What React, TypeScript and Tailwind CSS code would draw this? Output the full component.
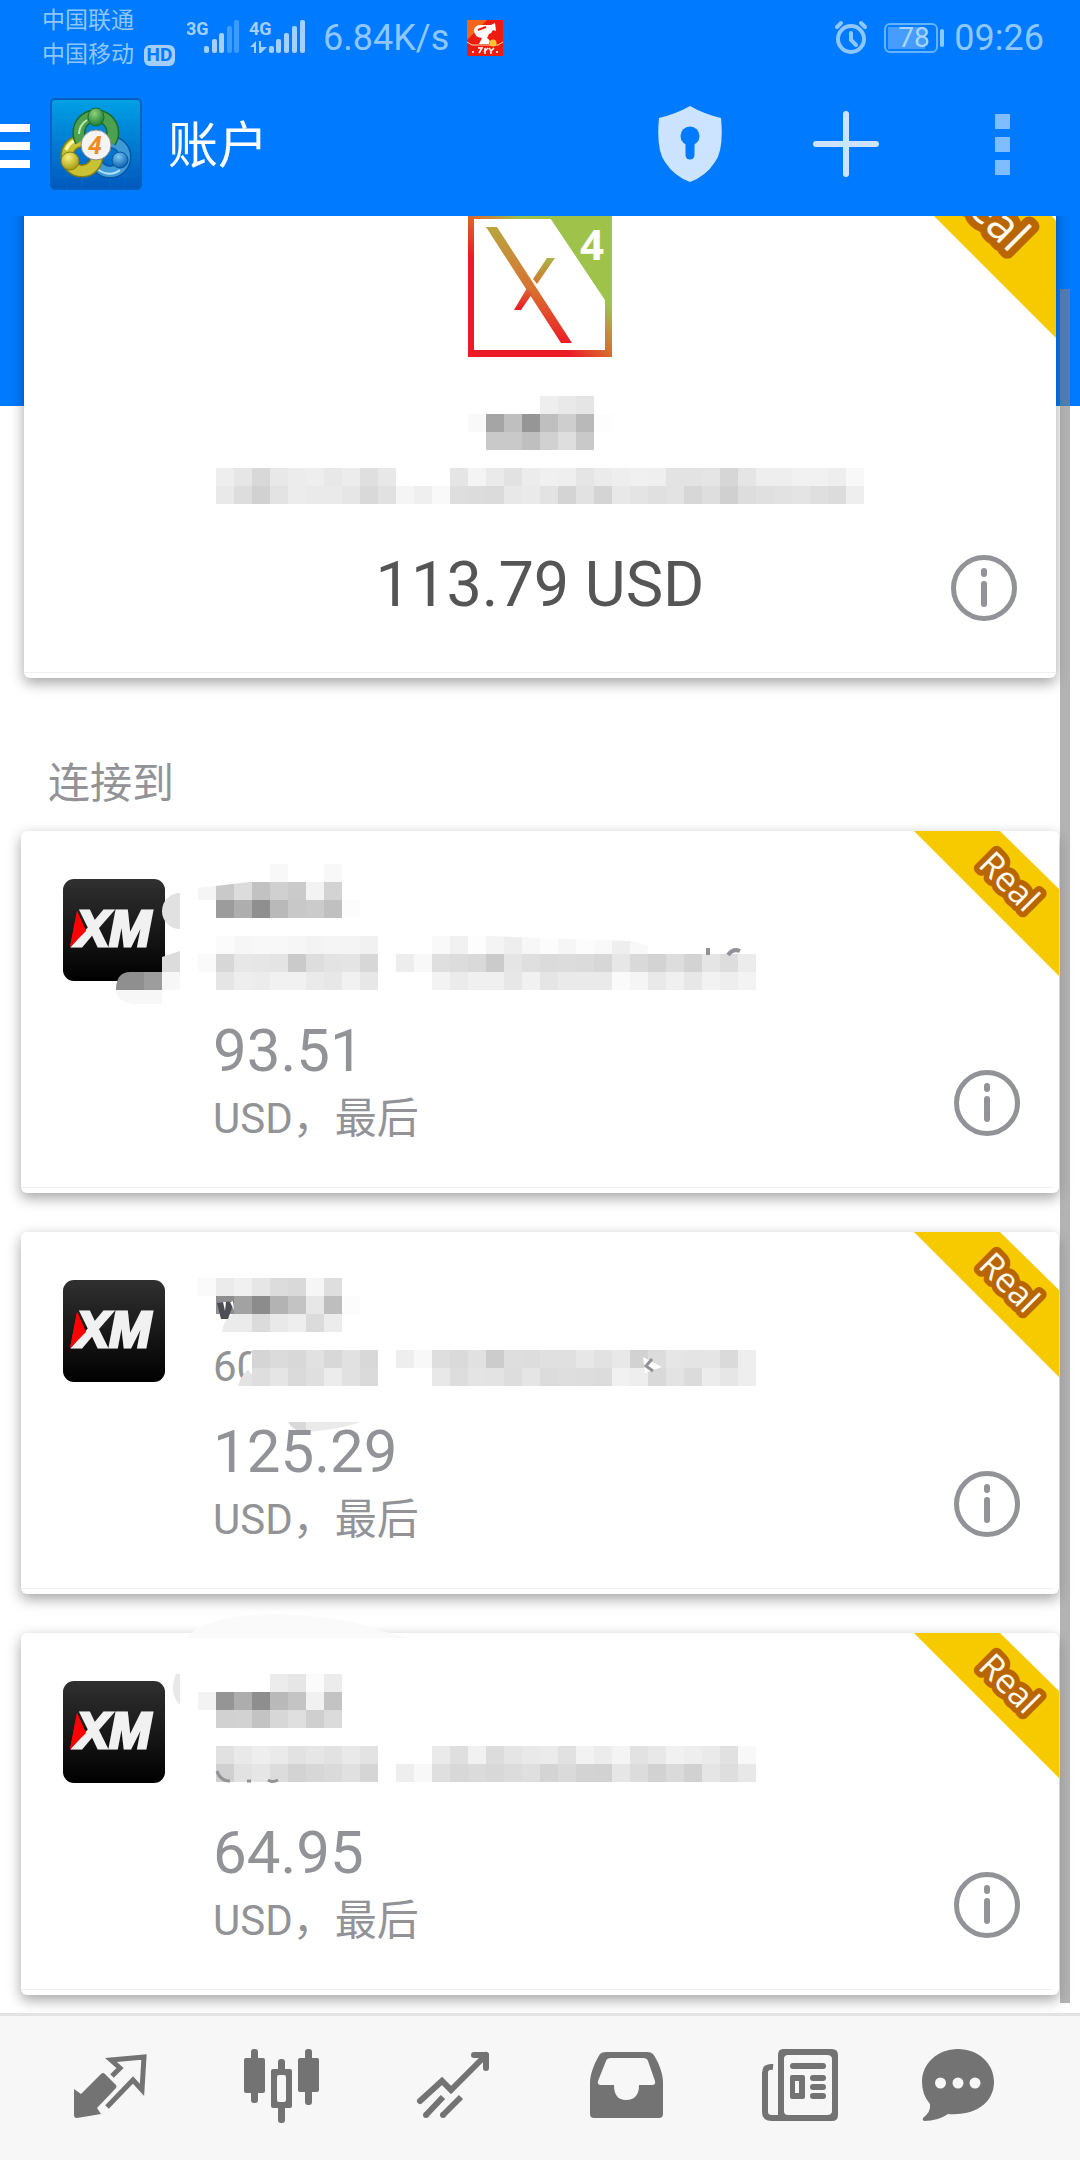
import React from 'react';
import { clsx } from 'clsx';

type MosaicRow = [x: number, y: number, shades: string];

interface Account {
  id: string;
  balance: string;
  rows: MosaicRow[];
  under?: React.ReactNode;
  over?: React.ReactNode;
}

const CELL = 18;

// x, y of the first cell, then one grey level per cell
const mainRows: MosaicRow[] = [
  [324, 0, 'ee e9 e5'],
  [252, 18, 'f9 a5 bf 96 bf ce b9 fd'],
  [270, 36, 'c9 c9 bf d1 de c9'],
  [0, 72, 'ee e6 d8 e8 ec ee e8 ec df e8'],
  [234, 72, 'e5 f4 ea e2 ec f0 ef e5 eb ee f0 ef e3 e3 e5 d6 e5 ee ee f1 f1 ee f8'],
  [0, 90, 'e9 dd d1 e3 ec ea ea e6 d9 e1 f5 ef f9'],
  [234, 90, 'de dc db e8 ea e3 d4 e2 d4 e8 e4 e0 e3 d7 de d0 dd e0 e2 e4 df dc ee'],
];

const accounts: Account[] = [
  {
    id: 'a',
    balance: '93.51',
    rows: [
      [54, 33, 'f8'],
      [108, 33, 'f8'],
      [-18, 51, 'f5 c9 dc c2 d0 ca f3 d3'],
      [0, 69, '9c ae 8f b9 c8 cb c0 fc'],
      [0, 105, 'fb f6 f8 f8 f6 f3 f5 f4 f1'],
      [216, 105, 'f9 f1 fd f4 ee f7 fc f6 fc f9 ee f8'],
      [-18, 123, 'fa d7 e7 e6 e4 ca dd e3 e4 d7'],
      [180, 123, 'ed f8 df dc d9 cb e5 df db dc db d7 e7 d9 d3 dd d3 e5 dd ec'],
      [0, 141, 'e5 ee ec f1 f1 ea e7 f1 e7'],
      [216, 141, 'f3 eb f0 f0 e7 f1 e5 ea ea ea fa f5 e9 f0 e7 f2 ee f3'],
    ],
    over: (
      <>
        <path d="M-36 62 A18 18 0 0 0 -36 98Z" fill="#e1e1e1" />
        <path d="M-54 126L-36 120V159H-54Z" fill="#dcdcdc" />
        <path d="M-54 141H-36V159H-54Z" fill="#f7f7f7" />
        <path d="M-84 173Q-100 170 -100 158H-54V173Z" fill="#f7f7f7" />
        <path d="M-100 159Q-100 141 -86 141H-72V159Z" fill="#8f8f8f" />
        <path d="M-72 141H-54V159H-72Z" fill="#9d9d9d" />
        <path d="M-18 57L34 51H-18Z M216 105H272L416 110L464 123H500V105Z" fill="#fff" />
        <path d="M492 117V124M512 124Q517 117 524 120" fill="none" stroke="#929397" strokeWidth="4" />
      </>
    ),
  },
  {
    id: 'b',
    balance: '125.29',
    rows: [
      [-18, 46, 'fa eb f0 e6 dc d9 f6 de'],
      [0, 64, '8e a2 8c b3 c3 e7 be fc'],
      [18, 82, 'eb db e9 ee db ec'],
      [36, 118, 'd5 db d8 e1 d8 e1 d8'],
      [180, 118, 'ee f8 de da e1 cc de dd e0 e0 e7 e2 e8 d2 dc e6 e4 e5 da ee'],
      [36, 136, 'de e5 da df ec e1 da'],
      [216, 136, 'e8 dd e4 e3 dd e5 dc de dd dc f1 ee d9 e3 db ec e6 ee'],
    ],
    under: (
      <text x="-3" y="149" fontSize="42" fill="#929397">60</text>
    ),
    over: (
      <>
        <path d="M6 100Q8 86 18 82V100Z" fill="#ebebeb" />
        <path d="M22 154Q26 140 36 136V154Z" fill="#e3e3e3" />
        <path d="M36 119Q28 134 35 142L36 142Z" fill="#fff" />
        <path d="M1 71L18 69L16 76L12 87H5Z" fill="#4d4d55" />
        <path d="M7 70L10 70L9 79Z M14 70L17 69L18 78Z" fill="#fff" />
        <path d="M72 190Q76 199 90 200V190Z" fill="#d8d8d8" />
        <path d="M90 190H146Q120 198 90 200Z" fill="#eaeaea" />
        <path d="M427 125L446 135L429 141Z" fill="#fff" />
        <path d="M436 127L430 134L437 139" fill="none" stroke="#929397" strokeWidth="3" />
      </>
    ),
  },
  {
    id: 'c',
    balance: '64.95',
    rows: [
      [54, 41, 'ec e6 fb ec'],
      [-18, 59, 'f3 95 ad 8e b9 c4 f1 c3'],
      [0, 77, 'd1 d2 c3 d7 df cf db'],
      [0, 113, 'e1 e9 ee ea e2 e6 e2 e9 e3'],
      [216, 113, 'ea df f1 dc e5 e9 eb e1 f2 ec f4 e2 e8 f1 ee ea e1 f8'],
      [0, 131, 'd0 e2 e6 dc d3 d7 da e0 d5'],
      [180, 131, 'ee f8 df d8 db d8 dc df d4 da d3 d2 e6 dc d2 da d1 e5 de e8'],
    ],
    under: <path d="M-30 5Q-10 -18 60 -19Q130 -17 166 -2L192 5H-30Z" fill="#fafafa" />,
    over: (
      <>
        <path d="M-36 41V72Q-48 60 -40 41Z" fill="#e8e8e8" />
        <path d="M1 138Q4 148 14 148M31 148H35M52 147Q56 150 62 147" fill="none" stroke="#929397" strokeWidth="3" />
      </>
    ),
  },
];

function Mosaic({ rows, under, over, className }: {
  rows: MosaicRow[];
  under?: React.ReactNode;
  over?: React.ReactNode;
  className: string;
}) {
  return (
    <svg className={clsx('block overflow-visible', className)} aria-hidden="true">
      {under}
      {rows.map(([x, y, shades]) =>
        shades.split(' ').map((s, i) => (
          <rect key={`${x}-${y}-${i}`} x={x + i * CELL} y={y} width={CELL} height={CELL} fill={`#${s}${s}${s}`} />
        ))
      )}
      {over}
    </svg>
  );
}

function Ribbon({ className }: { className: string }) {
  return (
    <svg viewBox="0 0 145 145" className={clsx('absolute top-0 right-0', className)}>
      <path d="M0 0H86L145 58V145Z" fill="#f7ca00" />
      <text
        transform="translate(87 59) rotate(45)"
        textAnchor="middle"
        fontSize="34"
        fontWeight="500"
        fill="#fffaf0"
        stroke="#b96600"
        strokeWidth="11"
        strokeLinejoin="round"
        paintOrder="stroke"
        className="font-['Open_Sans','Noto_Sans',sans-serif]"
      >
        Real
      </text>
    </svg>
  );
}

function InfoButton() {
  return (
    <button type="button" aria-label="Info" className="mr-[39px] size-[66px] shrink-0">
      <svg viewBox="0 0 66 66" fill="none" stroke="#929397" strokeLinecap="round">
        <circle cx="33" cy="33" r="30.5" strokeWidth="5" />
        <path d="M33 16V19M33 29V49" strokeWidth="6" />
      </svg>
    </button>
  );
}

function BrokerLogo() {
  return (
    <svg viewBox="0 0 144 144" className="mx-auto block size-36">
      <defs>
        <linearGradient id="frame" gradientUnits="userSpaceOnUse" x1="52" y1="92" x2="96" y2="48">
          <stop offset="0" stopColor="#ec1c27" />
          <stop offset="0.5" stopColor="#d8702f" />
          <stop offset="1" stopColor="#9fc24b" />
        </linearGradient>
        <linearGradient id="cross" gradientUnits="userSpaceOnUse" x1="0" y1="14" x2="0" y2="130">
          <stop offset="0" stopColor="#b8a63f" />
          <stop offset="0.55" stopColor="#d9702f" />
          <stop offset="1" stopColor="#ec1c27" />
        </linearGradient>
        <linearGradient id="arm" gradientUnits="userSpaceOnUse" x1="0" y1="45" x2="0" y2="96">
          <stop offset="0" stopColor="#aab447" />
          <stop offset="0.55" stopColor="#d9702f" />
          <stop offset="1" stopColor="#ec1c27" />
        </linearGradient>
      </defs>
      <path d="M0 0H144V144H0Z" fill="url(#frame)" />
      <path d="M6 6H83L137 87V137H6Z" fill="#fff" />
      <path d="M83 0H144V88H138L83 6Z" fill="#9fc24b" />
      <path d="M18 14H29L104 130H93Z" fill="url(#cross)" />
      <path d="M79 45H87L69 71L65 66ZM46 97H53L64 81L59 75Z" fill="url(#arm)" />
      <text x="124" y="47" textAnchor="middle" fontSize="42" fontWeight="700" fill="#fff" className="font-['Open_Sans',sans-serif]">4</text>
    </svg>
  );
}

function XmLogo() {
  return (
    <svg viewBox="0 0 102 102" className="mt-12 ml-[42px] block size-[102px] shrink-0">
      <defs>
        <linearGradient id="xm" x1="0" y1="0" x2="0" y2="1">
          <stop offset="0" stopColor="#303030" />
          <stop offset="1" stopColor="#000" />
        </linearGradient>
      </defs>
      <rect width="102" height="102" rx="11" fill="url(#xm)" />
      <path d="M14 32L23 52L7 68Z" fill="#f00" />
      <text
        x="13"
        y="67"
        fontSize="50"
        fontWeight="700"
        fontStyle="italic"
        fill="#f1f1f1"
        stroke="#f1f1f1"
        strokeWidth="3"
        className="font-['Liberation_Sans',sans-serif]"
      >
        XM
      </text>
      <path d="M14 32L23 52L7 68Z" fill="#f00" />
    </svg>
  );
}

function AppLogo() {
  return (
    <svg viewBox="0 0 92 92" className="ml-5 block size-[92px] shrink-0">
      <defs>
        <linearGradient id="tile" x1="0" y1="0" x2="0" y2="1">
          <stop offset="0" stopColor="#00a0e6" />
          <stop offset="1" stopColor="#0058bd" />
        </linearGradient>
        <radialGradient id="green" cx="0.4" cy="0.3" r="0.7">
          <stop offset="0" stopColor="#8ed07c" />
          <stop offset="1" stopColor="#1d7f33" />
        </radialGradient>
        <radialGradient id="yellow" cx="0.4" cy="0.3" r="0.7">
          <stop offset="0" stopColor="#f7f07a" />
          <stop offset="1" stopColor="#a79a12" />
        </radialGradient>
        <radialGradient id="blue" cx="0.4" cy="0.3" r="0.7">
          <stop offset="0" stopColor="#7cc8f5" />
          <stop offset="1" stopColor="#0b5fae" />
        </radialGradient>
      </defs>
      <rect x="1" y="1" width="90" height="90" rx="4" fill="url(#tile)" stroke="#0560c0" strokeWidth="2" />
      <path d="M17 2V90M32 2V90M60 2V90M75 2V90M2 20H90M2 40H90M2 60H90M2 78H90" stroke="#2ba6ea" strokeOpacity="0.12" />
      <g fill="none">
        <circle cx="60" cy="59" r="15" stroke="#0a56a0" strokeWidth="13" />
        <circle cx="60" cy="59" r="15" stroke="#3f9ad8" strokeWidth="10" />
        <path d="M46 69A17 17 0 0 0 70 72" stroke="#b5e2fb" strokeWidth="2" />
        <circle cx="32" cy="58" r="15" stroke="#857c10" strokeWidth="13" />
        <circle cx="32" cy="58" r="15" stroke="#c9c235" strokeWidth="10" />
        <path d="M16 52A17 17 0 0 1 32 41" stroke="#fbf8a8" strokeWidth="3" />
        <path d="M31 43A17 17 0 1 1 60 44" stroke="#1c6b2c" strokeWidth="13" />
        <path d="M31 43A17 17 0 1 1 60 44" stroke="#4da14e" strokeWidth="10" />
        <path d="M29 36A17 17 0 0 1 37 22" stroke="#bde8b0" strokeWidth="2" />
      </g>
      <ellipse cx="46" cy="19" rx="8" ry="9" fill="url(#green)" stroke="#1c6b2c" />
      <circle cx="20" cy="63" r="9" fill="url(#yellow)" stroke="#857c10" />
      <circle cx="70" cy="62" r="8" fill="url(#blue)" stroke="#0a56a0" />
      <circle cx="46" cy="47" r="15" fill="#f4f4f4" stroke="#8a8a8a" />
      <text x="45" y="56" textAnchor="middle" fontSize="25" fontWeight="700" fontStyle="italic" fill="#f08a24">4</text>
    </svg>
  );
}

function StatusBar() {
  return (
    <div className="flex h-[72px] items-center pt-1 pr-9 pl-[42px] text-4xl text-[#8ec7ff]">
      <div className="text-[23px] leading-[34px]">
        <div>中国联通</div>
        <div className="flex items-center">
          中国移动
          <span className="ml-2.5 flex h-[21px] w-[31px] items-center justify-center rounded-md bg-[#a3ceff] text-[19px] font-bold text-[#007aff]">
            HD
          </span>
        </div>
      </div>
      <svg viewBox="0 0 120 40" className="ml-3 block h-10 w-[120px]" fill="#a3d0ff">
        <g className="font-['Roboto',sans-serif]" fontSize="18" fontWeight="700">
          <text x="-1" y="17">3G</text>
          <text x="62" y="17">4G</text>
        </g>
        <rect x="17" y="28" width="5" height="7" rx="2" />
        <rect x="25" y="21" width="5" height="14" rx="2" />
        <rect x="32" y="15" width="5" height="20" rx="2" />
        <rect x="40" y="8" width="5" height="27" rx="2" fill="#3d9aff" />
        <rect x="47" y="2" width="5" height="33" rx="2" fill="#3d9aff" />
        <path d="M63 29L69 23V35H67V29ZM72 23H74V29H80L74 35H72Z" />
        <rect x="82" y="28" width="5" height="7" rx="2" />
        <rect x="89" y="21" width="5" height="14" rx="2" />
        <rect x="97" y="15" width="5" height="20" rx="2" />
        <rect x="105" y="8" width="5" height="27" rx="2" />
        <rect x="113" y="2" width="5" height="33" rx="2" />
      </svg>
      <span className="ml-4">6.84K/s</span>
      <svg viewBox="0 0 36 36" className="ml-[18px] block size-9">
        <rect width="36" height="36" fill="#ee1c10" />
        <path d="M0 0H20L0 20Z" fill="#f4661c" />
        <path d="M7 10Q8 5 14 5H24L28 3L29 11L26 10Q25 13 22 14L20 18Q24 20 22 24H12L15 18Q7 17 7 10Z" fill="#fff" />
        <path d="M11 10L19 7" stroke="#ee1c10" strokeWidth="2" />
        <path d="M0 22L5 25H31L36 22" fill="none" stroke="#ffd5a0" />
        <circle cx="26" cy="23" r="3.5" fill="#ffc62e" />
        <path d="M11 28H15L12 33M18 28V34M21 28L17 32M22 28L24 31L27 28M24 31V34M5 32H7M29 32H31" fill="none" stroke="#fff" strokeWidth="1.5" />
      </svg>
      <svg viewBox="0 0 34 36" className="ml-auto block h-9 w-[34px]" fill="none" stroke="#8ec7ff" strokeLinecap="round">
        <circle cx="17" cy="19" r="13" strokeWidth="4" />
        <path d="M17 13V20L22 25" strokeWidth="4" />
        <path d="M3 7L7 3M31 7L27 3" strokeWidth="4" />
      </svg>
      <div className="ml-4 flex h-[30px] w-[54px] items-center rounded-md border-2 border-[#63b3ff] p-0.5">
        <div className="flex h-full w-[37px] items-center bg-[#479dff] pl-2.5 text-[28px] leading-none text-[#a9d6ff]">78</div>
      </div>
      <div className="ml-0.5 h-[18px] w-1 rounded-sm bg-[#8ec7ff]" />
      <span className="ml-2.5">09:26</span>
    </div>
  );
}

function AppBar() {
  return (
    <div className="flex h-36 items-center pr-[70px]">
      <button type="button" aria-label="Menu" className="flex flex-col gap-2.5 pt-1">
        <span className="h-2 w-[30px] bg-white" />
        <span className="h-2 w-[30px] bg-white" />
        <span className="h-2 w-[30px] bg-white" />
      </button>
      <AppLogo />
      <h1 className="ml-[26px] pt-1 text-[50px] leading-[60px] text-white">账户</h1>
      <button type="button" aria-label="Security" className="ml-auto">
        <svg viewBox="0 0 64 76" className="block h-[76px] w-16">
          <path d="M32 0Q46 8 63 12Q66 44 57 56Q48 70 32 76Q16 70 7 56Q-2 44 1 12Q18 8 32 0Z" fill="#cce4ff" />
          <circle cx="32" cy="30" r="9.5" fill="#007aff" />
          <path d="M32 32V49" stroke="#007aff" strokeWidth="9" strokeLinecap="round" />
        </svg>
      </button>
      <button type="button" aria-label="Add account" className="ml-[91px]">
        <svg viewBox="0 0 66 66" className="block size-[66px]" stroke="#cce4ff" strokeWidth="6" strokeLinecap="round">
          <path d="M33 3V63M3 33H63" />
        </svg>
      </button>
      <button type="button" aria-label="More" className="ml-[116px] flex flex-col gap-2">
        <span className="size-[15px] bg-[#80bdff]" />
        <span className="size-[15px] bg-[#80bdff]" />
        <span className="size-[15px] bg-[#80bdff]" />
      </button>
    </div>
  );
}

function AccountCard({ account }: { account: Account }) {
  return (
    <li className="relative rounded-md bg-white px-1.5 pb-[5px] shadow-[0_5px_14px_rgba(0,0,0,0.36)]">
      <div className="-ml-1.5 flex border-b border-[#efefef]">
        <XmLogo />
        <div className="ml-12 flex-1 pb-[38px] text-[#929397]">
          <div className="pl-[3px]">
            <Mosaic rows={account.rows} under={account.under} over={account.over} className="h-[190px] w-full" />
          </div>
          <p className="text-[60px] leading-[60px]">{account.balance}</p>
          <p className="mt-2 text-[42px] leading-[60px]">USD，最后</p>
        </div>
        <div className="-mr-1.5 flex items-end pb-[51px]">
          <InfoButton />
        </div>
      </div>
      <Ribbon className="size-[145px]" />
    </li>
  );
}

const tabs = [
  {
    name: 'Quotes',
    icon: (
      <>
        <path d="M12 49L19 54L39 34Q41 32 43 34L54 45Q55 47 54 48L35 68L39 74L15 78Q12 78 12 75Z" />
        <path d="M50 36L58 28L49 20L82 17L80 50L71 40L45 67" fill="none" stroke="currentColor" strokeWidth="5" />
      </>
    ),
  },
  {
    name: 'Charts',
    icon: (
      <>
        <rect x="17" y="9" width="7" height="54" rx="3" />
        <rect x="10" y="18" width="21" height="35" rx="2" />
        <rect x="44" y="19" width="7" height="16" rx="3" />
        <rect x="44" y="62" width="7" height="21" rx="3" />
        <path fillRule="evenodd" d="M39 29H56Q58 29 58 31V66Q58 68 56 68H39Q37 68 37 66V31Q37 29 39 29ZM45 35Q43 35 43 37V60Q43 62 45 62H50Q52 62 52 60V37Q52 35 50 35Z" />
        <rect x="71" y="9" width="7" height="56" rx="3" />
        <rect x="64" y="18" width="21" height="34" rx="2" />
      </>
    ),
  },
  {
    name: 'Trade',
    icon: (
      <g fill="none" stroke="currentColor" strokeWidth="6">
        <path d="M14 61L36 41L45 50L80 15" strokeLinecap="round" />
        <path d="M68 15H80V28" strokeLinecap="round" strokeLinejoin="round" />
        <path d="M20 75L37 57M37 75L55 57" />
        <path d="M20 75H20M37 75H37" strokeLinecap="round" />
      </g>
    ),
  },
  {
    name: 'Mailbox',
    icon: (
      <path
        fillRule="evenodd"
        d="M12 42C12 33 18 20 22 14Q24 12 28 12H69Q73 12 75 14C80 21 85 33 85 42V74Q85 78 81 78H16Q12 78 12 74ZM20 41L28 21Q29 18 33 18H65Q69 18 70 21L77 41Q78 45 74 45H61Q61 60 48 60Q36 60 36 45H23Q19 45 20 41Z"
      />
    ),
  },
  {
    name: 'News',
    icon: (
      <>
        <path fillRule="evenodd" d="M33 9H82Q88 9 88 15V75Q88 81 82 81H33Q28 81 28 75V15Q28 9 33 9ZM38 15Q34 15 34 19V71Q34 75 38 75H77Q82 75 82 71V19Q82 15 77 15Z" />
        <path d="M23 27Q15 26 15 33V72Q15 78 22 78H33" fill="none" stroke="currentColor" strokeWidth="6" />
        <rect x="40" y="23" width="36" height="6" rx="3" />
        <path fillRule="evenodd" d="M42 35H53Q55 35 55 37V57Q55 59 53 59H42Q40 59 40 57V37Q40 35 42 35ZM45 41V53H49V41Z" />
        <rect x="60" y="35" width="16" height="6" rx="3" />
        <rect x="60" y="44" width="16" height="6" rx="3" />
        <rect x="60" y="53" width="16" height="6" rx="3" />
      </>
    ),
  },
  {
    name: 'Chat',
    icon: (
      <>
        <path d="M36 9C56 9 72 23 72 42S56 76 26 74Q16 81 2 81Q0 80 1 78Q9 72 8 64Q0 55 0 42C0 23 16 9 36 9Z" />
        <g fill="#f7f7f7">
          <circle cx="18.5" cy="43" r="5.5" />
          <circle cx="36" cy="43" r="5.5" />
          <circle cx="53" cy="43" r="5.5" />
        </g>
      </>
    ),
  },
];

export default function App() {
  return (
    <div className="flex min-h-screen flex-col bg-white font-['Roboto','Noto_Sans_CJK_SC',sans-serif]">
      <header className="bg-[#007aff]">
        <StatusBar />
        <AppBar />
      </header>

      <main className="relative flex flex-1 flex-col overflow-hidden bg-[linear-gradient(#007aff_190px,transparent_190px)] pb-[18px]">
        {/* list is scrolled, so the top of the active account sits under the bar */}
        <section className="relative mx-6 -mt-[74px] rounded-md bg-white pt-[71px] pb-[5px] shadow-[0_5px_14px_rgba(0,0,0,0.36)]">
          <BrokerLogo />
          <Mosaic rows={mainRows} className="mx-auto mt-[39px] h-[120px] w-[648px]" />
          <div className="mt-[33px] grid grid-cols-[1fr_auto_1fr] items-end border-b border-[#efefef] pb-[51px]">
            <p className="col-start-2 text-[63px] leading-[72px] text-[#555]">113.79 USD</p>
            <div className="flex justify-end">
              <InfoButton />
            </div>
          </div>
          <Ribbon className="size-[196px]" />
        </section>

        <h2 className="mt-[76px] ml-12 text-[42px] leading-[60px] text-[#929397]">连接到</h2>
        <ul className="mx-[21px] mt-[17px] flex flex-col gap-[39px]">
          {accounts.map((account) => (
            <AccountCard key={account.id} account={account} />
          ))}
        </ul>

        <div className="absolute top-[73px] right-2.5 bottom-2.5 w-2.5 bg-[#808080]/60" />
      </main>

      <nav className="grid h-[147px] grid-cols-6 items-center border-t-3 border-[#e3e3e3] bg-[#f7f7f7] px-6 text-[#737373]">
        {tabs.map((tab) => (
          <button key={tab.name} type="button" aria-label={tab.name} className="flex justify-center">
            <svg viewBox="0 0 96 96" className="block size-24" fill="currentColor">
              {tab.icon}
            </svg>
          </button>
        ))}
      </nav>
    </div>
  );
}
